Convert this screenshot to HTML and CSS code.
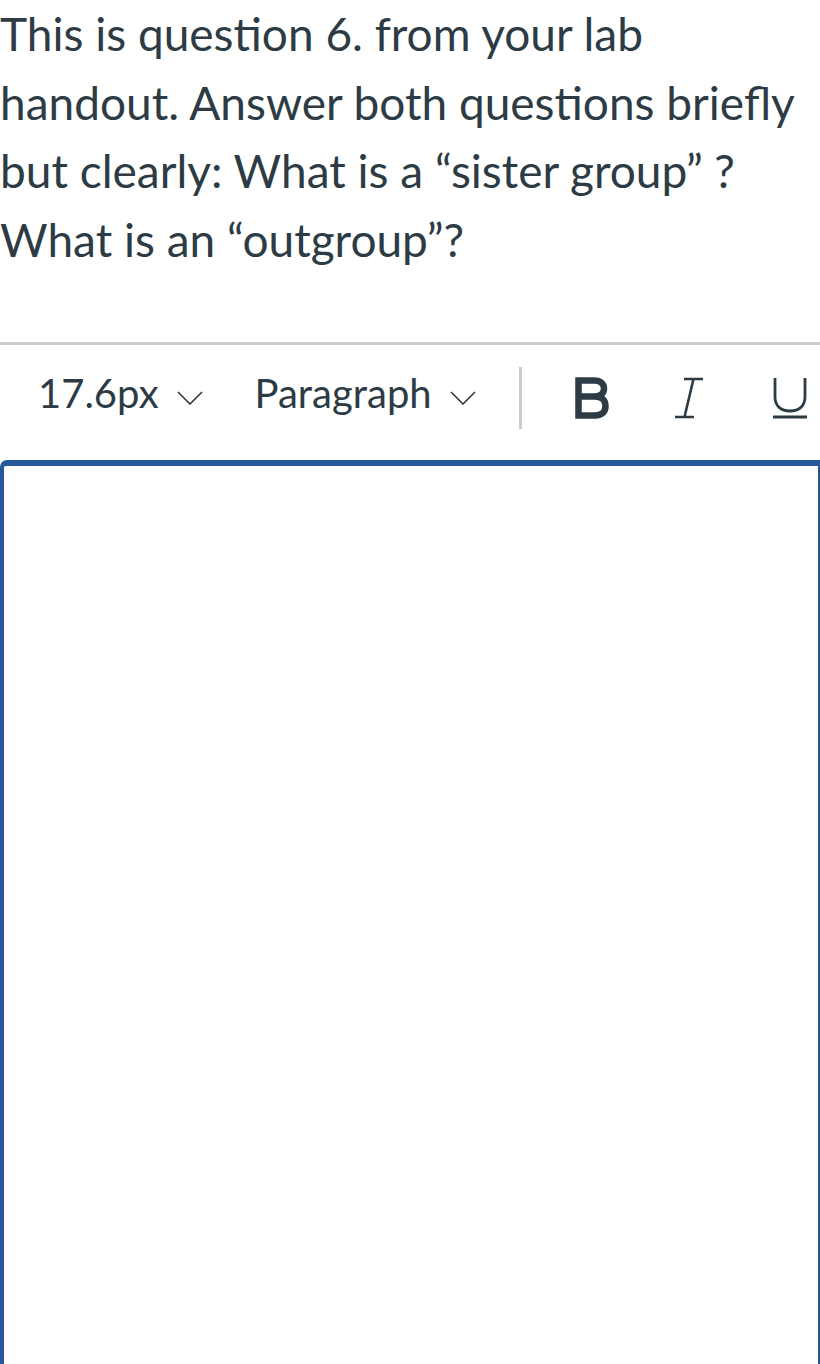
FILE: index.html
```html
<!DOCTYPE html>
<html lang="en">
<head>
<meta charset="utf-8">
<title>Question</title>
<link rel="stylesheet" href="styles.css">
</head>
<body>
<main class="page">
  <p class="question">This is question 6. from your lab handout. Answer both questions briefly but clearly: What is a “sister group” ? What is an “outgroup”?</p>
  <div class="rule"></div>
  <div class="toolbar">
    <div class="select size">
      <span>17.6px</span>
      <svg class="chev" viewBox="0 0 26 14" width="26" height="14"><path d="M1 1 L13 13 L25 1" fill="none" stroke="#2d3b45" stroke-width="1.6"/></svg>
    </div>
    <div class="select block">
      <span>Paragraph</span>
      <svg class="chev" viewBox="0 0 26 14" width="26" height="14"><path d="M1 1 L13 13 L25 1" fill="none" stroke="#2d3b45" stroke-width="1.6"/></svg>
    </div>
    <div class="sep"></div>
    <button class="tool bold" aria-label="Bold">
      <svg viewBox="0 0 34 42" width="34" height="42"><path d="M3.5 3.5 H19 C26 3.5 29 7 29 11.5 C29 16 26 19.5 19 19.5 H3.5 M3.5 19.5 H20 C27.5 19.5 30.5 23.5 30.5 29 C30.5 34.5 27.5 38.5 20 38.5 H3.5 M3.5 3.5 V38.5" fill="none" stroke="#2d3b45" stroke-width="6.5" stroke-linejoin="miter" stroke-linecap="square"/></svg>
    </button>
    <button class="tool italic" aria-label="Italic">
      <svg viewBox="0 0 30 42" width="30" height="42"><path d="M10 2 H29 M1 40 H20 M19.5 2 L10.5 40" fill="none" stroke="#2d3b45" stroke-width="2.6"/></svg>
    </button>
    <button class="tool underline" aria-label="Underline">
      <svg viewBox="0 0 34 42" width="34" height="42"><path d="M2 1 V20 C2 29 8 34 17 34 C26 34 32 29 32 20 V1 M0 40 H34" fill="none" stroke="#2d3b45" stroke-width="2.8"/></svg>
    </button>
  </div>
  <div class="editor" contenteditable="true"></div>
</main>
</body>
</html>
```

FILE: styles.css
```css
html, body {
  margin: 0;
  padding: 0;
  background: #ffffff;
}

.page {
  width: 820px;
  font-family: Lato, "Noto Sans", sans-serif;
  color: #2d3b45;
}

.question {
  margin: 0;
  padding: 0 12px 0 0;
  font-size: 46px;
  line-height: 68.5px;
  height: 342px;
  box-sizing: border-box;
}

.rule {
  height: 3px;
  background: #c7cdd1;
}

.toolbar {
  display: flex;
  align-items: center;
  height: 115px;
  padding-left: 38px;
  padding-bottom: 10px;
  box-sizing: border-box;
}

.select {
  display: flex;
  align-items: center;
  font-size: 40px;
  gap: 18px;
}

.select span {
  margin-bottom: 10px;
}

.select.size {
  margin-right: 52px;
}

.select .chev {
  display: block;
}

.sep {
  width: 3px;
  height: 62px;
  background: #c7cdd1;
  margin-left: 43px;
  margin-right: 53px;
}

.tool {
  border: 0;
  background: none;
  padding: 0;
  display: flex;
  align-items: center;
}

.tool svg {
  display: block;
}

.bold {
  margin-right: 65px;
}

.italic {
  margin-right: 69px;
}

.editor {
  height: 910px;
  border-style: solid;
  border-color: #27589a;
  border-width: 6px 2px 0 4px;
  border-top-left-radius: 7px;
  box-sizing: border-box;
}
```
